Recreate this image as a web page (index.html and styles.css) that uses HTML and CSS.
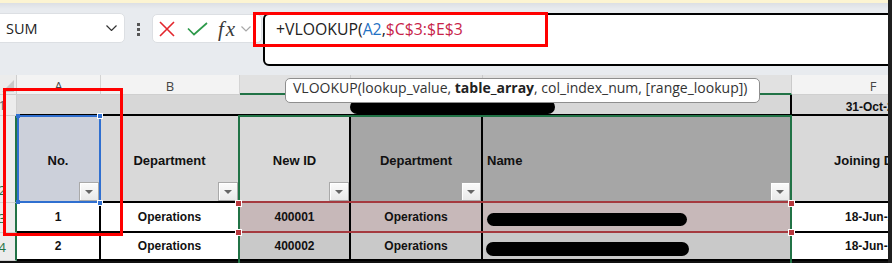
FILE: index.html
```html
<!DOCTYPE html>
<html>
<head>
<meta charset="utf-8">
<link rel="stylesheet" href="styles.css">
</head>
<body>
<div class="app">
  <div class="topstrip"></div>
  <div class="fbar">
    <div class="namebox">
      <span class="nb-text">SUM</span>
      <svg class="nb-chev" width="11" height="6" viewBox="0 0 11 6"><polyline points="0.5,0.5 5.5,5.5 10.5,0.5" fill="none" stroke="#333" stroke-width="1.2"/></svg>
    </div>
    <div class="grip"><i></i><i></i><i></i></div>
    <div class="fxbox">
      <svg class="ico-x" width="16" height="16" viewBox="0 0 16 16"><path d="M1 1L15 15M15 1L1 15" stroke="#e3262d" stroke-width="1.6" fill="none"/></svg>
      <svg class="ico-ok" width="21" height="14" viewBox="0 0 21 14"><polyline points="1,6.5 7,12.5 20,1" fill="none" stroke="#2e9a4b" stroke-width="1.7"/></svg>
      <span class="fx">fx</span>
      <svg class="fx-chev" width="10" height="6" viewBox="0 0 10 6"><polyline points="0.5,0.5 5,5 9.5,0.5" fill="none" stroke="#a8a8a8" stroke-width="1.2"/></svg>
    </div>
    <div class="formula"><span class="f-plain">+VLOOKUP(</span><span class="f-blue">A2</span><span class="f-plain">,</span><span class="f-red">$C$3:$E$3</span></div>
    <div class="annot annot-formula"></div>
  </div>

  <div class="sheet">
    <div class="corner"><svg width="12" height="12" viewBox="0 0 12 12"><polygon points="12,0 12,12 0,12" fill="#c9c9c9"/></svg></div>
    <div class="ch">A</div>
    <div class="ch">B</div>
    <div class="ch sel"></div>
    <div class="ch sel"></div>
    <div class="ch sel"></div>
    <div class="ch last">F</div>

    <div class="rh">1</div>
    <div class="c r1 span5"><span class="blob b1"></span></div>
    <div class="c r1 date nb">31-Oct-24</div>

    <div class="rh s bottom">2</div>
    <div class="c h a2">No.<span class="dd"></span></div>
    <div class="c h">Department<span class="dd"></span></div>
    <div class="c h">New ID<span class="dd"></span></div>
    <div class="c h dk">Department<span class="dd"></span></div>
    <div class="c h dk left">Name<span class="dd"></span></div>
    <div class="c h nb">Joining Date</div>

    <div class="rh s">3</div>
    <div class="c w">1</div>
    <div class="c w">Operations</div>
    <div class="c pk">400001</div>
    <div class="c pk">Operations</div>
    <div class="c pk left"><span class="blob b3"></span></div>
    <div class="c w nb">18-Jun-24</div>

    <div class="rh s">4</div>
    <div class="c w">2</div>
    <div class="c w">Operations</div>
    <div class="c gr">400002</div>
    <div class="c gr">Operations</div>
    <div class="c gr left"><span class="blob b4"></span></div>
    <div class="c w nb">18-Jun-24</div>

    <div class="ref-red"></div>
    <div class="sel-box"></div>
    <div class="ref-blue"></div>
    <span class="hb hb-tl"></span>
    <span class="hb hb-bl"></span>
    <span class="hb big hb-tr"></span>
    <span class="hb big hb-br"></span>
    <span class="hr hr-tl"></span>
    <span class="hr hr-bl"></span>
    <span class="hr hr-tr"></span>
    <span class="hr hr-br"></span>

    <div class="annot annot-cell"></div>
    <div class="tooltip">VLOOKUP(lookup_value, <b>table_array</b>, col_index_num, [range_lookup])</div>
  </div>
</div>
</body>
</html>
```

FILE: styles.css
```css
* { box-sizing: border-box; margin: 0; padding: 0; }
html, body { width: 892px; height: 263px; overflow: hidden; background: #1f1f1f; }

.app {
  width: 888px;
  height: 263px;
  overflow: hidden;
  background: #e8ebef;
  position: relative;
}

.topstrip { height: 3px; background: #fcf4d2; }

.fbar {
  position: relative;
  height: 72px;
  display: flex;
  align-items: flex-start;
  padding-top: 10px;
  background: linear-gradient(#dcdfe4 0, #e8ebef 6px);
  font-family: "Open Sans", "Liberation Sans", sans-serif;
}
.fbar > * { flex-shrink: 0; }

.namebox {
  margin-left: -6px;
  width: 131px;
  height: 30px;
  background: #fff;
  border: 1px solid #dcdfe3;
  border-radius: 5px;
  display: flex;
  align-items: center;
  padding-left: 11px;
  padding-right: 7px;
  font-size: 14.5px;
  color: #222;
}
.nb-chev { margin-left: auto; }

.grip {
  margin-left: 12px;
  margin-top: 10px;
  display: flex;
  flex-direction: column;
  gap: 2px;
}
.grip i { display: block; width: 3px; height: 3px; background: #555; }

.fxbox {
  margin-left: 12px;
  margin-top: 1px;
  width: 110px;
  height: 29px;
  background: #fff;
  border: 1px solid #dcdfe3;
  border-radius: 5px;
  display: flex;
  align-items: center;
  padding-left: 6px;
}
.ico-ok { margin-left: 12px; }
.fx {
  margin-left: 10px;
  font-family: "Liberation Serif", serif;
  font-style: italic;
  font-size: 21px;
  letter-spacing: 2px;
  color: #3a3a3a;
  line-height: 20px;
}
.fx-chev { margin-left: 4px; }

.formula {
  margin-left: 1px;
  width: 640px;
  height: 53px;
  background: #fff;
  border: 2px solid #000;
  border-radius: 6px;
  padding: 4px 0 0 11px;
  font-size: 15.8px;
  line-height: 20px;
  color: #222;
  white-space: nowrap;
}
.f-blue { color: #1f72c4; }
.f-red { color: #c8244a; }

.annot { position: absolute; border: 3px solid #ff0000; }
.annot-formula { left: 253px; top: 9px; width: 295px; height: 35px; }

/* sheet */
.sheet {
  position: relative;
  display: grid;
  grid-template-columns: 17px 84px 139px 111px 132px 309px 162px;
  grid-template-rows: 20px 21px 87px 30px 28px;
  height: 188px;
  background: #111;
}

.corner {
  background: #ececec;
  border-right: 1px solid #cfcfcf;
  border-bottom: 1px solid #cfcfcf;
  display: flex;
  align-items: flex-end;
  justify-content: flex-end;
  padding: 0 2px 2px 0;
}

.ch {
  background: #f3f3f3;
  border-right: 1px solid #d4d4d4;
  border-bottom: 1px solid #cfcfcf;
  display: flex;
  align-items: center;
  justify-content: center;
  padding-top: 2px;
  font-family: "Open Sans", "Liberation Sans", sans-serif;
  font-size: 13px;
  color: #444;
}
.ch.sel { background: #e1e1e1; border-bottom: 2px solid #217346; border-right-color: #cacaca; }
.ch.last { border-right: none; }

.rh {
  background: #ececec;
  border-right: 1px solid #cfcfcf;
  border-bottom: 1px solid #d0d0d0;
  display: flex;
  align-items: center;
  justify-content: flex-end;
  padding-right: 10px;
  overflow: hidden;
  font-family: "Open Sans", "Liberation Sans", sans-serif;
  font-size: 13px;
  color: #666;
}
.rh.s { border-right: 2px solid #217346; color: #217346; padding-right: 9px; }
.rh.bottom { align-items: flex-end; padding-bottom: 3px; }

.c {
  position: relative;
  display: flex;
  align-items: center;
  justify-content: center;
  border-right: 2px solid #000;
  border-bottom: 2px solid #000;
  overflow: hidden;
  white-space: nowrap;
  font-family: "Liberation Sans", Arial, sans-serif;
  font-weight: bold;
  font-size: 12px;
  color: #111;
}
.c.nb { border-right: none; }
.c.left { justify-content: flex-start; padding-left: 4px; }

.r1 { background: #d7d7d7; }
.span5 {
  grid-column: span 5;
  justify-content: flex-start;
  align-items: flex-end;
  padding-left: 333px;
}
.r1.date { padding-top: 4px; }

.h { font-size: 13px; background: #d9d9d9; padding-top: 4px; }
.h.a2 { background: #ccd0da; }
.h.dk { background: #a6a6a6; }

.w { background: #fff; }
.pk { background: #c7b8b9; }
.gr { background: #c9c9c9; }

.blob { display: block; background: #000; border-radius: 7px; }
.b1 { width: 205px; height: 14px; }
.b3 { width: 200px; height: 13px; margin-top: 5px; }
.b4 { width: 203px; height: 14px; margin-top: 6px; margin-left: -1px; }

.dd {
  position: absolute;
  right: 0;
  bottom: 0;
  width: 20px;
  height: 19px;
  border: 1px solid #a9a9a9;
  background: linear-gradient(#fbfbfb, #e9e9e9);
  box-shadow: inset 1px 1px 0 #fff;
  display: flex;
  align-items: center;
  justify-content: center;
}
.dd::after {
  content: "";
  width: 0;
  height: 0;
  border-left: 4px solid transparent;
  border-right: 4px solid transparent;
  border-top: 4px solid #666;
}

/* overlays */
.ref-red {
  position: absolute;
  left: 238px;
  top: 126px;
  width: 554px;
  height: 32px;
  border-top: 2px solid #a53a3f;
  border-bottom: 2px solid #a53a3f;
}
.sel-box {
  position: absolute;
  left: 238px;
  top: 40px;
  width: 554px;
  height: 150px;
  border: 2px solid #217346;
  border-bottom: none;
}
.ref-blue {
  position: absolute;
  left: 17px;
  top: 40px;
  width: 84px;
  height: 88px;
  border: 2px solid #2f6fd0;
}
.hb { position: absolute; background: #2f6fd0; width: 4px; height: 4px; }
.hb.big { width: 6px; height: 6px; border: 1px solid #fff; }
.hb-tl { left: 16px; top: 39px; }
.hb-bl { left: 16px; top: 125px; }
.hb-tr { left: 97px; top: 38px; }
.hb-br { left: 97px; top: 125px; }

.hr { position: absolute; width: 7px; height: 7px; background: #b8383d; border: 1px solid #fff; }
.hr-tl { left: 235px; top: 125px; }
.hr-bl { left: 235px; top: 154px; }
.hr-tr { left: 788px; top: 125px; }
.hr-br { left: 788px; top: 154px; }

.annot-cell { left: 3px; top: 13px; width: 120px; height: 148px; }

.tooltip {
  position: absolute;
  left: 285px;
  top: 3px;
  width: 475px;
  height: 25px;
  background: #fff;
  border: 1px solid #8e8e8e;
  border-radius: 5px;
  padding-left: 7px;
  font-family: "Open Sans", "Liberation Sans", sans-serif;
  font-size: 14px;
  line-height: 18px;
  color: #333;
  white-space: nowrap;
}
.tooltip b { font-weight: bold; color: #222; }
```
